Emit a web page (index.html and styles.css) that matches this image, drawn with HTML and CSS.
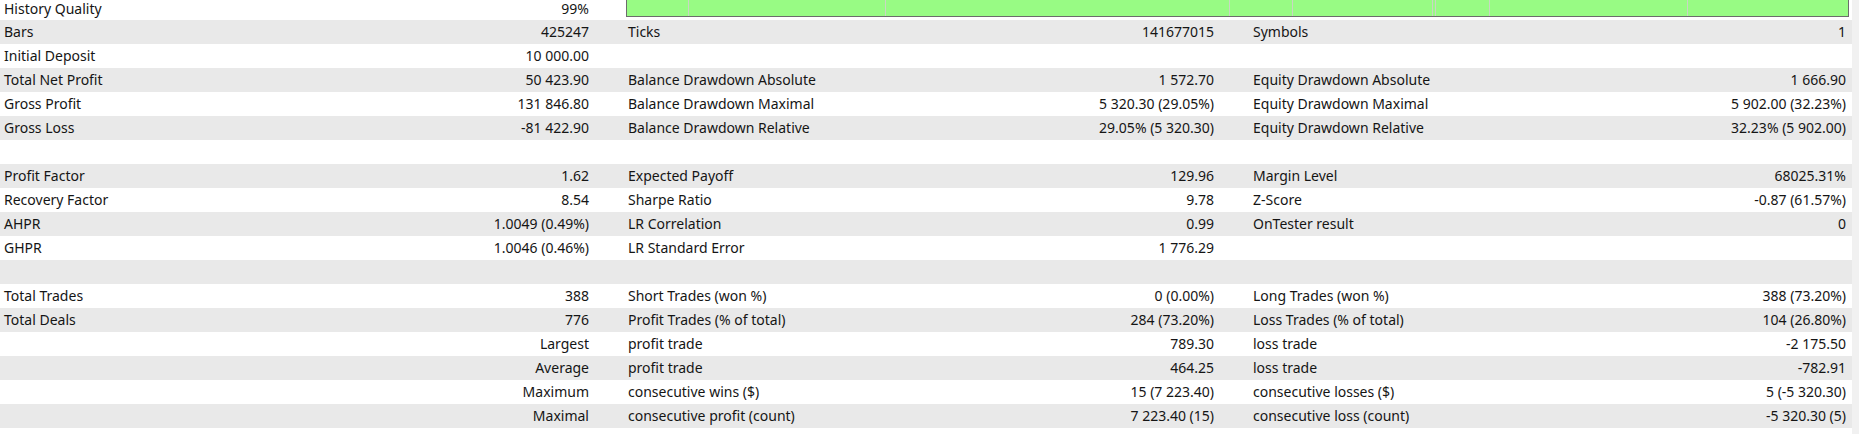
FILE: index.html
```html
<!DOCTYPE html>
<html>
<head>
<meta charset="utf-8">
<link rel="stylesheet" href="styles.css">
</head>
<body>
<div class="page">
  <div class="report">
    <div class="row first">
      <span class="lbl">History Quality</span><span class="val">99%</span>
      <div class="quality">
        <span class="tick" style="left:61px"></span>
        <span class="tick" style="left:258px"></span>
        <span class="tick" style="left:602px"></span>
        <span class="tick" style="left:665px"></span>
        <span class="tick" style="left:805px"></span>
        <span class="tick" style="left:808px"></span>
        <span class="tick" style="left:862px"></span>
        <span class="tick" style="left:1060px"></span>
      </div>
    </div>
    <div class="row alt">
      <span class="lbl">Bars</span><span class="val">425247</span>
      <span class="lbl2">Ticks</span><span class="val">141677015</span>
      <span class="lbl2">Symbols</span><span class="val end">1</span>
    </div>
    <div class="row">
      <span class="lbl">Initial Deposit</span><span class="val">10 000.00</span>
      <span class="lbl2"></span><span class="val"></span>
      <span class="lbl2"></span><span class="val end"></span>
    </div>
    <div class="row alt">
      <span class="lbl">Total Net Profit</span><span class="val">50 423.90</span>
      <span class="lbl2">Balance Drawdown Absolute</span><span class="val">1 572.70</span>
      <span class="lbl2">Equity Drawdown Absolute</span><span class="val end">1 666.90</span>
    </div>
    <div class="row">
      <span class="lbl">Gross Profit</span><span class="val">131 846.80</span>
      <span class="lbl2">Balance Drawdown Maximal</span><span class="val">5 320.30 (29.05%)</span>
      <span class="lbl2">Equity Drawdown Maximal</span><span class="val end">5 902.00 (32.23%)</span>
    </div>
    <div class="row alt">
      <span class="lbl">Gross Loss</span><span class="val">-81 422.90</span>
      <span class="lbl2">Balance Drawdown Relative</span><span class="val">29.05% (5 320.30)</span>
      <span class="lbl2">Equity Drawdown Relative</span><span class="val end">32.23% (5 902.00)</span>
    </div>
    <div class="row"></div>
    <div class="row alt">
      <span class="lbl">Profit Factor</span><span class="val">1.62</span>
      <span class="lbl2">Expected Payoff</span><span class="val">129.96</span>
      <span class="lbl2">Margin Level</span><span class="val end">68025.31%</span>
    </div>
    <div class="row">
      <span class="lbl">Recovery Factor</span><span class="val">8.54</span>
      <span class="lbl2">Sharpe Ratio</span><span class="val">9.78</span>
      <span class="lbl2">Z-Score</span><span class="val end">-0.87 (61.57%)</span>
    </div>
    <div class="row alt">
      <span class="lbl">AHPR</span><span class="val">1.0049 (0.49%)</span>
      <span class="lbl2">LR Correlation</span><span class="val">0.99</span>
      <span class="lbl2">OnTester result</span><span class="val end">0</span>
    </div>
    <div class="row">
      <span class="lbl">GHPR</span><span class="val">1.0046 (0.46%)</span>
      <span class="lbl2">LR Standard Error</span><span class="val">1 776.29</span>
      <span class="lbl2"></span><span class="val end"></span>
    </div>
    <div class="row alt"></div>
    <div class="row">
      <span class="lbl">Total Trades</span><span class="val">388</span>
      <span class="lbl2">Short Trades (won %)</span><span class="val">0 (0.00%)</span>
      <span class="lbl2">Long Trades (won %)</span><span class="val end">388 (73.20%)</span>
    </div>
    <div class="row alt">
      <span class="lbl">Total Deals</span><span class="val">776</span>
      <span class="lbl2">Profit Trades (% of total)</span><span class="val">284 (73.20%)</span>
      <span class="lbl2">Loss Trades (% of total)</span><span class="val end">104 (26.80%)</span>
    </div>
    <div class="row">
      <span class="lbl"></span><span class="val">Largest</span>
      <span class="lbl2">profit trade</span><span class="val">789.30</span>
      <span class="lbl2">loss trade</span><span class="val end">-2 175.50</span>
    </div>
    <div class="row alt">
      <span class="lbl"></span><span class="val">Average</span>
      <span class="lbl2">profit trade</span><span class="val">464.25</span>
      <span class="lbl2">loss trade</span><span class="val end">-782.91</span>
    </div>
    <div class="row">
      <span class="lbl"></span><span class="val">Maximum</span>
      <span class="lbl2">consecutive wins ($)</span><span class="val">15 (7 223.40)</span>
      <span class="lbl2">consecutive losses ($)</span><span class="val end">5 (-5 320.30)</span>
    </div>
    <div class="row alt">
      <span class="lbl"></span><span class="val">Maximal</span>
      <span class="lbl2">consecutive profit (count)</span><span class="val">7 223.40 (15)</span>
      <span class="lbl2">consecutive loss (count)</span><span class="val end">-5 320.30 (5)</span>
    </div>
  </div>
  <div class="scroll"></div>
</div>
</body>
</html>
```
FILE: styles.css
```css
html, body {
  margin: 0;
  padding: 0;
  background: #ffffff;
  overflow: hidden;
}

.page {
  display: flex;
  width: 1859px;
  height: 434px;
  overflow: hidden;
  font-family: "Noto Sans", "Segoe UI", sans-serif;
  font-size: 14px;
  color: #151515;
}

.report {
  width: 1852px;
  display: flex;
  flex-direction: column;
}

.row {
  display: grid;
  grid-template-columns: 300px 293px 313px 312px 313px 321px;
  height: 24px;
  line-height: 24px;
  white-space: nowrap;
}

.row.first {
  height: 20px;
  line-height: 17px;
}

.row.alt {
  background: #e9e9e9;
}

.lbl {
  padding-left: 4px;
}

.lbl2 {
  padding-left: 35px;
}

.val {
  text-align: right;
  padding-right: 4px;
}

.val.end {
  padding-right: 6px;
}

.quality {
  grid-column: 3 / 7;
  position: relative;
  margin-left: 33px;
  margin-right: 3px;
  height: 17px;
  box-sizing: border-box;
  background: #98fb84;
  border-left: 1px solid #6c6c6c;
  border-right: 1px solid #6c6c6c;
  border-bottom: 1px solid #6c6c6c;
}

.tick {
  position: absolute;
  top: 0;
  bottom: 0;
  width: 1px;
  background: #c9d6c3;
}

.scroll {
  width: 7px;
  background: #f1f1f1;
}
```
